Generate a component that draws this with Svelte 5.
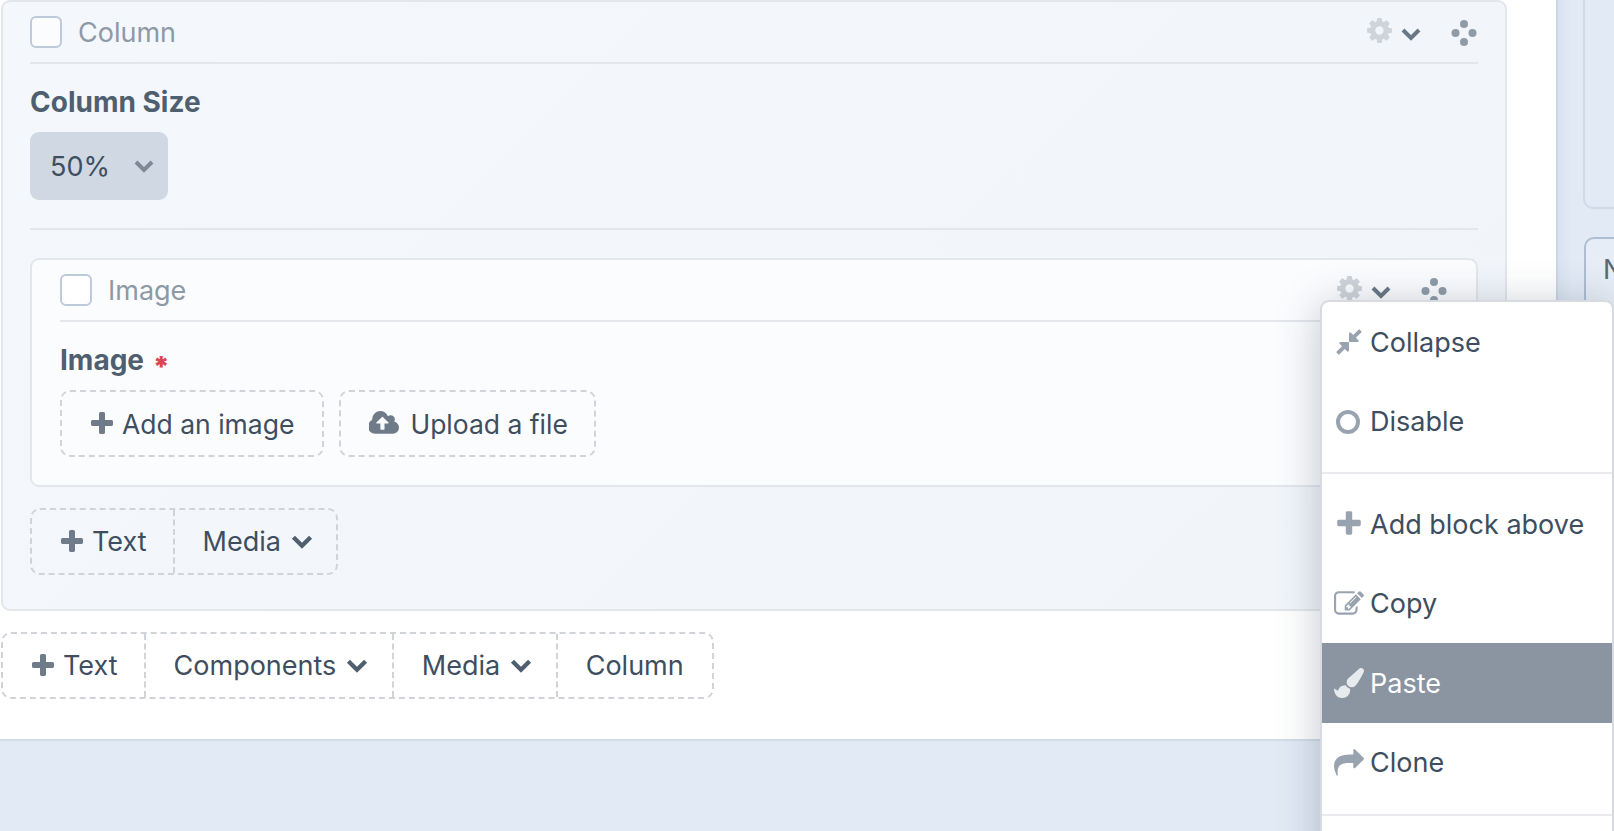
<script>
    // font awesome 4 style glyphs, 1792 box unless the icon says otherwise
    const paths = {
        cog: "M1152 896q0-106-75-181t-181-75-181 75-75 181 75 181 181 75 181-75 75-181zm512-109v222q0 12-8 23t-20 13l-185 28q-19 54-39 91 35 50 107 138 10 12 10 25t-9 23q-27 37-99 108t-94 71q-12 0-26-9l-138-108q-44 23-91 38-16 136-29 186-7 28-36 28h-222q-14 0-24.5-8.5t-11.5-21.5l-28-184q-49-16-90-37l-141 107q-10 9-25 9-14 0-25-11-126-114-165-168-7-10-7-23 0-12 8-23 15-21 51-66.5t54-70.5q-27-50-41-99l-183-27q-13-2-21-12.5t-8-23.5v-222q0-12 8-23t19-13l186-28q14-46 39-92-40-57-107-138-10-12-10-24 0-10 9-23 26-36 98.5-107.5t94.5-71.5q13 0 26 10l138 107q44-23 91-38 16-136 29-186 7-28 36-28h222q14 0 24.5 8.5t11.5 21.5l28 184q49 16 90 37l142-107q9-9 24-9 13 0 25 10 129 119 165 170 7 8 7 22 0 12-8 23-15 21-51 66.5t-54 70.5q26 50 41 98l183 28q13 2 21 12.5t8 23.5z",
        plus: "M1600 736v192q0 40-28 68t-68 28h-416v416q0 40-28 68t-68 28h-192q-40 0-68-28t-28-68v-416h-416q-40 0-68-28t-28-68v-192q0-40 28-68t68-28h416v-416q0-40 28-68t68-28h192q40 0 68 28t28 68v416h416q40 0 68 28t28 68z",
        compress: "M896 960v448q0 26-19 45t-45 19-45-19l-144-144-332 332q-10 10-23 10t-23-10l-114-114q-10-10-10-23t10-23l332-332-144-144q-19-19-19-45t19-45 45-19h448q26 0 45 19t19 45zm755-672q0 13-10 23l-332 332 144 144q19 19 19 45t-19 45-45 19h-448q-26 0-45-19t-19-45v-448q0-26 19-45t45-19 45 19l144 144 332-332q10-10 23-10t23 10l114 114q10 10 10 23z",
        edit: "M888 1184l116-116-152-152-116 116v56h96v96h56zm440-720q-16-16-33 1l-350 350q-17 17-1 33t33-1l350-350q17-17 1-33zm80 594v190q0 119-84.5 203.5t-203.5 84.5h-832q-119 0-203.5-84.5t-84.5-203.5v-832q0-119 84.5-203.5t203.5-84.5h832q63 0 117 25 15 7 18 23 3 17-9 29l-49 49q-14 14-32 8-23-6-45-6h-832q-66 0-113 47t-47 113v832q0 66 47 113t113 47h832q66 0 113-47t47-113v-126q0-13 9-22l64-64q15-15 35-7t20 29zm-96-738l288 288-672 672h-288v-288zm444 132l-92 92-288-288 92-92q28-28 68-28t68 28l152 152q28 28 28 68t-28 68z",
        brush: "M1615 0q70 0 122.5 46.5t52.5 116.5q0 63-45 151-332 629-465 752-97 91-218 91-126 0-216.5-92.5t-90.5-219.5q0-128 92-212l638-579q59-54 130-54zm-909 1034q39 76 106.5 130t150.5 76l1 71q4 213-129.5 347t-348.5 134q-123 0-218-46.5t-152.5-127.5-86.5-183-29-220q7 5 41 30t62 44.5 59 36.5 46 17q41 0 55-37 25-66 57.5-112.5t69.5-76 88-47.5 103-25.5 125-10.5z",
        share: "M1792 640q0 26-19 45l-512 512q-19 19-45 19t-45-19-19-45v-256h-224q-98 0-175.5 6t-154 21.5-133 42.5-105.5 69-80 101-48 138.5-17.5 181.5q0 55 5 123 0 6 2.5 23.5t2.5 26.5q0 15-8.5 25t-23.5 10q-16 0-28-17-7-9-13-22t-13.5-30-10.5-24q-127-285-127-451 0-199 53-333 162-403 875-403h224v-256q0-26 19-45t45-19 45 19l512 512q19 19 19 45z",
        cloud: "M1216 864q0-14-9-23l-352-352q-9-9-23-9t-23 9l-351 351q-10 12-10 24 0 14 9 23t23 9h224v352q0 13 9.5 22.5t22.5 9.5h192q13 0 22.5-9.5t9.5-22.5v-352h224q13 0 22.5-9.5t9.5-22.5zm640 288q0 159-112.5 271.5t-271.5 112.5h-1088q-185 0-316.5-131.5t-131.5-316.5q0-130 70-240t188-165q-2-30-2-43 0-212 150-362t362-150q156 0 285.5 87t188.5 231q71-62 166-62 106 0 181 75t75 181q0 76-41 138 130 31 213.5 135.5t83.5 238.5z",
    };

    const menuTop = [
        { label: "Collapse", icon: "compress" },
        { label: "Disable", icon: "ring" },
    ];
    const menuBottom = [
        { label: "Add block above", icon: "plus" },
        { label: "Copy", icon: "edit" },
        { label: "Paste", icon: "brush", active: true },
        { label: "Clone", icon: "share" },
    ];
</script>

{#snippet fa(name, cls)}
    <svg class="ico {cls}" viewBox={name === "cloud" ? "0 0 1920 1792" : "0 0 1792 1792"} aria-hidden="true">
        <path d={paths[name]} />
    </svg>
{/snippet}

{#snippet chevron(cls)}
    <svg class="chev {cls}" viewBox="0 0 20 14" aria-hidden="true">
        <polyline points="2,3 10,11 18,3" />
    </svg>
{/snippet}

{#snippet tools()}
    <div class="tools">
        {@render fa("cog", "gear")}
        {@render chevron("tool-chev")}
        <svg class="move" viewBox="0 0 26 26" aria-hidden="true">
            <circle cx="13" cy="4" r="4" />
            <circle cx="4.5" cy="13" r="4" />
            <circle cx="21.5" cy="13" r="4" />
            <circle cx="13" cy="22" r="4" />
        </svg>
    </div>
{/snippet}

{#snippet blockHead(title)}
    <header class="head">
        <span class="check"></span>
        <span class="title">{title}</span>
        {@render tools()}
    </header>
{/snippet}

<div class="page">
    <main class="main">
        <section class="panel column">
            {@render blockHead("Column")}
            <label class="label first" for="size">Column Size</label>
            <div class="select" id="size">
                <span>50%</span>
                {@render chevron("select-chev")}
            </div>
            <hr class="rule" />

            <section class="panel image">
                {@render blockHead("Image")}
                <div class="label">Image <span class="req">*</span></div>
                <div class="chooser">
                    <button class="dash add">{@render fa("plus", "btn-ico")} Add an image</button>
                    <button class="dash upload">{@render fa("cloud", "cloud-ico")} Upload a file</button>
                </div>
            </section>

            <div class="dash group nested">
                <button class="seg">{@render fa("plus", "btn-ico")} Text</button>
                <button class="seg">Media {@render chevron("btn-chev")}</button>
            </div>
        </section>

        <div class="dash group">
            <button class="seg">{@render fa("plus", "btn-ico")} Text</button>
            <button class="seg">Components {@render chevron("btn-chev")}</button>
            <button class="seg">Media {@render chevron("btn-chev")}</button>
            <button class="seg">Column</button>
        </div>
    </main>

    <aside class="side">
        <div class="card one"></div>
        <div class="card two">N</div>
    </aside>

    <div class="menu">
        <ul>
            {#each menuTop as item}
                <li>
                    {#if item.icon === "ring"}
                        <span class="ring"></span>
                    {:else}
                        {@render fa(item.icon, "menu-ico")}
                    {/if}
                    {item.label}
                </li>
            {/each}
        </ul>
        <ul class="second">
            {#each menuBottom as item}
                <li class:active={item.active}>
                    {@render fa(item.icon, "menu-ico")}
                    {item.label}
                </li>
            {/each}
        </ul>
    </div>
</div>

<style>
    :global(body) {
        overflow: hidden;
        background: #e1eaf5;
    }
    .page {
        position: relative;
        display: flex;
        width: 1614px;
        height: 831px;
        overflow: hidden;
        font-family: Inter, "Liberation Sans", sans-serif;
        font-size: 27px;
        color: #3e4e5e;
        background: #e1eaf5;
    }
    .main {
        flex: none;
        box-sizing: border-box;
        width: 1556px;
        height: 741px;
        padding-left: 1px;
        background: #fff;
        border-bottom: 2px solid #d2dce7;
    }
    .panel {
        box-sizing: border-box;
        border: 2px solid #e3e7ec;
        border-radius: 9px;
    }
    .column {
        width: 1506px;
        height: 611px;
        padding: 0 27px;
        background: linear-gradient(135deg, #f4f7fc, #f1f5fa);
    }
    .image {
        width: 1448px;
        height: 229px;
        padding: 0 28px;
        background: #fbfcfe;
    }
    .head {
        display: flex;
        align-items: center;
        height: 60px;
        border-bottom: 2px solid #e3e7ec;
    }
    .check {
        box-sizing: border-box;
        width: 32px;
        height: 32px;
        background: #fbfcfe;
        border: 2px solid #bccadb;
        border-radius: 6px;
    }
    .image .check {
        background: #fff;
    }
    .title {
        margin-left: 16px;
        color: #8e99a6;
    }
    .tools {
        display: flex;
        align-items: center;
        margin-left: auto;
        margin-right: 1px;
    }
    .ico {
        display: block;
        flex: none;
        fill: currentColor;
    }
    .gear {
        width: 29px;
        height: 29px;
        margin-top: -4px;
        color: #cfd3da;
    }
    .chev {
        display: block;
        flex: none;
        fill: none;
        stroke: currentColor;
        stroke-width: 4;
    }
    .tool-chev {
        width: 20px;
        height: 14px;
        margin-left: 7px;
        margin-top: 3px;
        color: #6a7786;
    }
    .move {
        width: 26px;
        height: 26px;
        margin-left: 30px;
        margin-top: 2px;
        fill: #8f9ca8;
    }
    .label {
        margin: 24px 0 16px;
        font-size: 28px;
        font-weight: 700;
        line-height: 28px;
        color: #4f5f6f;
    }
    label.label {
        display: block;
    }
    .req {
        display: inline-block;
        margin-left: 2px;
        font-weight: 900;
        color: #dc4654;
        transform: translateY(7px);
    }
    .select {
        display: flex;
        align-items: center;
        justify-content: space-between;
        box-sizing: border-box;
        width: 138px;
        height: 68px;
        padding: 0 14px 0 20px;
        background: #cfd8e3;
        border-radius: 9px;
    }
    .select-chev {
        width: 20px;
        height: 14px;
        color: #7d8996;
    }
    .rule {
        height: 2px;
        margin: 28px 0;
        background: #e3e7ec;
        border: 0;
    }
    button {
        display: flex;
        align-items: center;
        font: inherit;
        color: inherit;
        background: none;
        border: 0;
        margin: 0;
    }
    .dash {
        border: 2px dashed #d0d4d9;
        border-radius: 10px;
    }
    .chooser {
        display: flex;
        gap: 15px;
    }
    .chooser .dash {
        box-sizing: border-box;
        height: 67px;
        padding: 0 28px;
        gap: 10px;
        font-size: 26.5px;
    }
    .chooser .upload {
        padding-right: 26px;
    }
    .btn-ico {
        width: 28px;
        height: 28px;
        margin: 0 -4px 0 -2px;
        color: #6f7b88;
    }
    .cloud-ico {
        width: 31px;
        height: 29px;
        color: #6f7b88;
    }
    .group {
        display: inline-flex;
        box-sizing: border-box;
        height: 67px;
        margin-top: 21px;
    }
    .nested {
        display: flex;
        width: fit-content;
    }
    .seg {
        padding: 0 28px;
        gap: 10px;
        border-right: 2px dashed #d0d4d9;
    }
    .seg:first-child {
        padding-right: 26px;
    }
    .seg:last-child {
        border-right: 0;
    }
    .btn-chev {
        width: 22px;
        height: 15px;
        margin-right: -4.5px;
        color: #4f5f6f;
    }
    .side {
        flex: 1;
        min-width: 0;
        box-sizing: border-box;
        padding: 0 0 0 25px;
        background: linear-gradient(90deg, #d9e3ef, #e1eaf5 14px);
        border-left: 2px solid #c8d6e6;
    }
    .card {
        box-sizing: border-box;
        width: 60px;
        border: 2px solid #cfdae8;
        border-right: 0;
        border-radius: 10px 0 0 10px;
    }
    .one {
        height: 209px;
        border-top: 0;
        border-radius: 0 0 0 10px;
    }
    .two {
        height: 200px;
        margin: 28px 0 0 1px;
        padding: 14px 0 0 17px;
        color: #5a6875;
        background: #e6edf6;
        border-color: #adbdd2;
    }
    .menu {
        position: absolute;
        left: 1320px;
        top: 300px;
        box-sizing: border-box;
        width: 294px;
        height: 600px;
        background: #fff;
        border: 2px solid #d7dbe0;
        border-radius: 9px;
        box-shadow: 0 6px 44px rgba(40, 55, 75, 0.28);
    }
    ul {
        margin: 0;
        padding: 0 0 11px;
        list-style: none;
        border-bottom: 2px solid #e8eaed;
    }
    .second {
        padding: 10px 0 12px;
    }
    li {
        display: flex;
        align-items: center;
        gap: 6px;
        box-sizing: border-box;
        height: 79.5px;
        padding: 1px 0 0 12px;
    }
    .menu-ico {
        width: 30px;
        height: 30px;
        color: #98a3af;
    }
    .ring {
        box-sizing: border-box;
        width: 24px;
        height: 24px;
        margin: 0 4px 0 2px;
        border: 4px solid #98a3af;
        border-radius: 50%;
    }
    .active {
        color: #fff;
        background: #8a95a1;
    }
    .active .menu-ico {
        color: #e8ebee;
    }
</style>
